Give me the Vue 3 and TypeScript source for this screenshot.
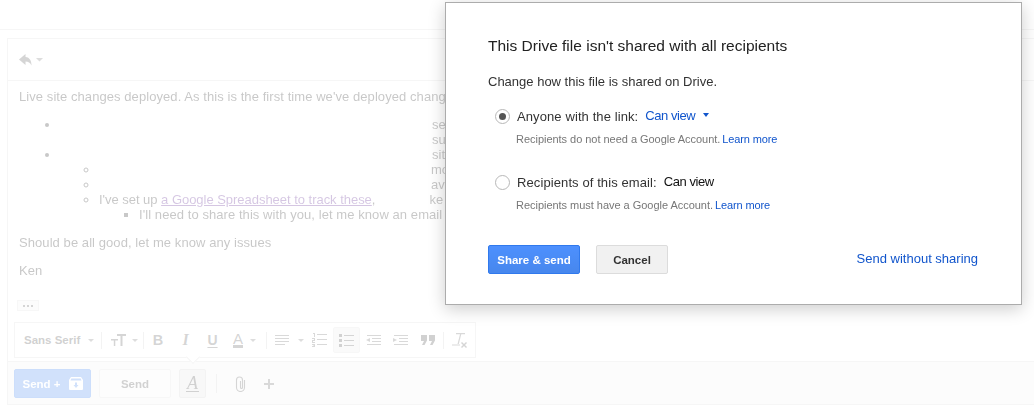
<script setup lang="ts">
const title = "This Drive file isn't shared with all recipients"
</script>

<template>
  <div class="page">
    <div class="dim">
      <div class="topbar"></div>
      <section class="card">
        <header class="head">
          <svg class="reply" width="26" height="14" viewBox="0 0 26 14">
            <path d="M7.5 1 1 6.500 7.500 12V8.500c3 0 4.500 1 6 4 0-4.800-1.700-8-6-8.500z" fill="#555" />
            <path d="M18 5h7l-3.500 3.500z" fill="#777" />
          </svg>
        </header>
        <div class="body">
          <p class="line first">Live site changes deployed. As this is the first time we've deployed changes</p>
          <ul class="l1">
            <li><span class="g1"></span>se<br /><span class="g1"></span>su</li>
            <li>
              <span class="g1"></span>sit
              <ul class="l2">
                <li><span class="g2"></span>mo</li>
                <li><span class="g2"></span>ave</li>
                <li>
                  I've set up <a class="link">a Google Spreadsheet to track these</a>,<span class="g3"></span>ke
                  <ul class="l3">
                    <li>I'll need to share this with you, let me know an email</li>
                  </ul>
                </li>
              </ul>
            </li>
          </ul>
          <p class="line good">Should be all good, let me know any issues</p>
          <p class="line ken">Ken</p>
          <div class="more"><i></i><i></i><i></i></div>
        </div>
        <div class="tools">
          <span class="t font">Sans Serif<b class="caret"></b></span>
          <span class="sep"></span>
          <span class="t size">
            <svg width="15" height="14" viewBox="0 0 15 14"><path d="M0 6h7v1.500H4.300V13H2.800V7.500H0zM6 1h9v2h-3.500v10h-2V3H6z" fill="#555" /></svg>
            <b class="caret"></b>
          </span>
          <span class="sep"></span>
          <span class="t glyph bold">B</span>
          <span class="t glyph ital">I</span>
          <span class="t glyph under">U</span>
          <span class="t color"><span class="a">A</span><b class="caret"></b></span>
          <span class="sep"></span>
          <span class="t align">
            <svg width="15" height="11" viewBox="0 0 15 11"><path d="M0 0h14v1H0zM0 3h14v1H0zM0 6h14v1H0zM0 9h10v1H0z" fill="#666" /></svg>
            <b class="caret"></b>
          </span>
          <span class="t ic">
            <svg width="15" height="14" viewBox="0 0 15 14"><path d="M5 1h10v1H5zM5 6h10v1H5zM5 11h10v1H5z" fill="#666" /><path d="M1 0h2v4H2V1H1zM0 5h3v3H1v1h2v1H0V7h2V6H0zM0 11h3v3H0v-1h2v-.500H1v-.500h1V12H0z" fill="#666" /></svg>
          </span>
          <span class="t ic on">
            <svg width="15" height="13" viewBox="0 0 15 13"><path d="M0 0h3v3H0zM0 5h3v3H0zM0 10h3v3H0z" fill="#444" /><path d="M5 1h10v1H5zM5 6h10v1H5zM5 11h10v1H5z" fill="#555" /></svg>
          </span>
          <span class="t ic">
            <svg width="15" height="11" viewBox="0 0 15 11"><path d="M1 0h14v1H1zM6 3h9v1H6zM6 6h9v1H6zM1 9h14v1H1z" fill="#666" /><path d="M4 3v4L0 5z" fill="#666" /></svg>
          </span>
          <span class="t ic">
            <svg width="15" height="11" viewBox="0 0 15 11"><path d="M1 0h14v1H1zM6 3h9v1H6zM6 6h9v1H6zM1 9h14v1H1z" fill="#666" /><path d="M0 3v4l4-2z" fill="#666" /></svg>
          </span>
          <span class="t ic">
            <svg width="14" height="10" viewBox="0 0 14 10"><path d="M0 0h6v5.500L3.500 10H1l2-4H0zM8 0h6v5.500L11.500 10H9l2-4H8z" fill="#444" /></svg>
          </span>
          <span class="sep sep-last"></span>
          <span class="t clear">
            <svg width="15" height="15" viewBox="0 0 15 15"><path d="M4 0h9v1.200H9.300L6.800 11H5.500L8 1.200H4zM0 11.500h8v1H0z" fill="#666" /><path d="M9 10l1-1 2 2 2-2 1 1-2 2 2 2-1 1-2-2-2 2-1-1 2-2z" fill="#555" /></svg>
          </span>
        </div>
        <footer class="foot">
          <button class="send-plus">Send +
            <svg width="14" height="13" viewBox="0 0 14 13"><path fill-rule="evenodd" d="M2 0h10l2 3v9a1 1 0 0 1-1 1H1a1 1 0 0 1-1-1V3zM1.500 3.500l.8-2h9.400l.8 2zM6 5.500V8H4.500L7 11l2.500-3H8V5.500z" fill="#fff" /></svg>
          </button>
          <button class="send">Send</button>
          <span class="fmt"><span class="fa">A</span></span>
          <span class="fsep"></span>
          <svg class="clip" width="11" height="16" viewBox="0 0 11 16"><path d="M9.500 4v7.500a4 4 0 0 1-8 0V4a3 3 0 0 1 6 0v7.500a1 1 0 0 1-2 0V5" fill="none" stroke="#555" stroke-width="1.100" /></svg>
          <svg class="plus" width="10" height="10" viewBox="0 0 10 10"><path d="M4 0h2v4h4v2H6v4H4V6H0V4h4z" fill="#666" /></svg>
        </footer>
      </section>
    </div>
    <div class="dialog">
      <h2>{{ title }}</h2>
      <p class="intro">Change how this file is shared on Drive.</p>
      <div class="opt">
        <span class="radio checked"></span>
        <span class="lab">Anyone with the link:</span>
        <span class="perm blue">Can view<b class="down"></b></span>
      </div>
      <p class="note">Recipients do not need a Google Account. <a>Learn more</a></p>
      <div class="opt second">
        <span class="radio"></span>
        <span class="lab">Recipients of this email:</span>
        <span class="perm">Can view</span>
      </div>
      <p class="note">Recipients must have a Google Account. <a>Learn more</a></p>
      <div class="actions">
        <button class="primary">Share &amp; send</button>
        <button class="cancel">Cancel</button>
        <a class="without">Send without sharing</a>
      </div>
    </div>
  </div>
</template>

<style>
html, body { margin: 0; background: #fff; overflow: hidden; }
</style>

<style scoped>
.page {
  position: relative;
  width: 1034px;
  height: 411px;
  overflow: hidden;
  font-family: "Liberation Sans", Arial, sans-serif;
  background: #fff;
  color: #222;
}
.dim { opacity: .25; }
.topbar { height: 29px; border-bottom: 1px solid #d8d8d8; }
.card {
  margin: 8px 0 0 7px;
  border: 1px solid #d8d8d8;
  border-right: 0;
  height: 367px;
  box-sizing: border-box;
  display: flex;
  flex-direction: column;
}
.head { height: 41px; border-bottom: 1px solid #d8d8d8; display: flex; align-items: center; padding-left: 10px; }
.reply { margin-top: 1px; }
.body { flex: 1; min-height: 0; font-size: 13px; line-height: 15px; letter-spacing: .07px; color: #222; padding: 0 11px; }
.line { margin: 0; white-space: nowrap; }
.first { margin-top: 8px; }
.good { margin-top: 13px; }
.ken { margin-top: 13px; }
ul { margin: 0; padding: 0; white-space: nowrap; }
.l1 { margin-top: 13px; padding-left: 41px; list-style-type: disc; }
.l2 { padding-left: 39px; list-style-type: circle; letter-spacing: -.03px; }
.l3 { padding-left: 40px; list-style-type: square; letter-spacing: .07px; }
.g1 { display: inline-block; width: 372px; }
.g2 { display: inline-block; width: 332px; }
.g3 { display: inline-block; width: 54px; }
.link { color: #551a8b; text-decoration: underline; }
.more {
  margin: 22px 0 0 -2px;
  width: 22px;
  height: 11px;
  box-sizing: border-box;
  border: 1px solid #ddd;
  background: #f1f1f1;
  display: flex;
  align-items: center;
  justify-content: center;
  gap: 2px;
}
.more i { width: 2px; height: 2px; background: #555; }
.tools {
  margin: 0 0 3px 6px;
  width: 462px;
  height: 36px;
  box-sizing: border-box;
  border: 1px solid #d8d8d8;
  display: flex;
  align-items: center;
  padding-left: 8px;
  color: #555;
  position: relative;
  z-index: 1;
  background: #fff;
  flex: none;
}
.tools::after {
  content: "";
  position: absolute;
  left: 173px;
  top: 29px;
  width: 9px;
  height: 9px;
  background: #fff;
  border-right: 1px solid #d8d8d8;
  border-bottom: 1px solid #d8d8d8;
  transform: rotate(45deg);
}
.t { display: flex; align-items: center; justify-content: center; height: 26px; flex: none; }
.font { font-size: 11.500px; font-weight: 700; width: 78px; justify-content: flex-start; color: #444; padding-left: 1px; box-sizing: border-box; }
.caret { width: 0; height: 0; border: 3px solid transparent; border-top: 3.500px solid #777; border-bottom: 0; margin-left: 8px; }
.sep { width: 1px; height: 17px; background: #ccc; flex: none; }
.sep-last { margin-left: 2px; }
.size { width: 41px; justify-content: flex-start; padding-left: 9px; box-sizing: border-box; }
.size .caret { margin-left: 6px; }
.glyph { width: 27px; font-size: 14px; }
.bold { font-weight: 700; width: 28px; font-size: 14.500px; }
.ital { font-style: italic; font-family: "Liberation Serif", serif; font-weight: 700; font-size: 16px; }
.under { text-decoration: underline; font-weight: 700; text-underline-offset: 2px; }
.color { width: 40px; justify-content: flex-start; padding-left: 7px; box-sizing: border-box; }
.color .a { font-size: 15px; border-bottom: 3px solid #555; line-height: 13px; }
.color .caret { margin-left: 7px; }
.align { width: 39px; justify-content: flex-start; padding-left: 8px; box-sizing: border-box; }
.align .caret { margin-left: 8px; }
.ic { width: 27px; }
.on { background: #e8e8e8; border: 1px solid #ddd; box-sizing: border-box; border-radius: 2px; }
.clear { width: 20px; justify-content: flex-start; padding-left: 8px; box-sizing: content-box; }
.foot {
  height: 43px;
  border-top: 1px solid #d8d8d8;
  background: #f1f1f1;
  display: flex;
  align-items: center;
  padding: 1px 0 0 6px;
  box-sizing: border-box;
  flex: none;
}
.send-plus, .send {
  font: 700 11.500px "Liberation Sans", Arial, sans-serif;
  height: 29px;
  box-sizing: border-box;
  border-radius: 2px;
  padding: 0;
}
.send-plus {
  width: 77px;
  background: #4787ed;
  border: 1px solid #3079ed;
  color: #fff;
  display: flex;
  align-items: center;
  justify-content: center;
  gap: 8px;
}
.send { width: 72px; margin-left: 8px; background: #f5f5f5; border: 1px solid #ddd; color: #444; }
.fmt {
  margin-left: 8px;
  width: 27px;
  height: 29px;
  box-sizing: border-box;
  background: #e2e2e2;
  border: 1px solid #ccc;
  border-radius: 2px;
  display: flex;
  align-items: center;
  justify-content: center;
}
.fa { font: italic 18px "Liberation Serif", serif; color: #444; border-bottom: 1px solid #444; line-height: 15px; padding: 0 1px; }
.fsep { width: 1px; height: 19px; background: #ccc; margin-left: 10px; }
.clip { margin-left: 18px; }
.plus { margin-left: 18px; }
.dialog {
  position: absolute;
  left: 445px;
  top: 2px;
  width: 577px;
  height: 303px;
  box-sizing: border-box;
  background: #fff;
  border: 1px solid #acacac;
  box-shadow: 0 4px 16px rgba(0, 0, 0, .2);
  padding: 33px 42px 0;
}
h2 { margin: 0; font-size: 15.500px; line-height: 20px; font-weight: 400; color: #222; white-space: nowrap; }
.intro { margin: 18px 0 0; font-size: 13px; line-height: 15px; color: #333; }
.opt { display: flex; align-items: center; margin-top: 19px; margin-left: 7px; height: 16px; font-size: 13px; letter-spacing: .1px; color: #333; }
.second { margin-top: 28px; }
.radio {
  width: 15px;
  height: 15px;
  box-sizing: border-box;
  border: 1px solid #b8b8b8;
  border-radius: 50%;
  margin-right: 7px;
  display: flex;
  align-items: center;
  justify-content: center;
  flex: none;
}
.checked::after { content: ""; width: 7px; height: 7px; border-radius: 50%; background: #555; }
.perm { margin-left: 7px; letter-spacing: -.45px; color: #111; position: relative; top: -1px; display: flex; align-items: center; }
.blue { color: #15c; }
.down { width: 0; height: 0; border: 3.500px solid transparent; border-top: 4px solid #15c; border-bottom: 0; margin-left: 8px; }
.note { margin: 8px 0 0 28px; font-size: 11px; line-height: 14px; letter-spacing: -.03px; color: #777; white-space: nowrap; }
.note a { color: #15c; letter-spacing: -.12px; margin-left: -1px; }
.actions { display: flex; align-items: center; margin-top: 33px; }
.actions button { height: 29px; box-sizing: border-box; border-radius: 2px; font: 700 11.500px "Liberation Sans", Arial, sans-serif; padding: 0; }
.primary { width: 92px; background: linear-gradient(#4d90fe, #4787ed); border: 1px solid #3079ed; color: #fff; }
.cancel { width: 72px; margin-left: 16px; background: #f1f1f1; border: 1px solid #dcdcdc; color: #333; }
.without { margin-left: auto; margin-top: -3px; margin-right: 1px; font-size: 13px; color: #15c; }
</style>
